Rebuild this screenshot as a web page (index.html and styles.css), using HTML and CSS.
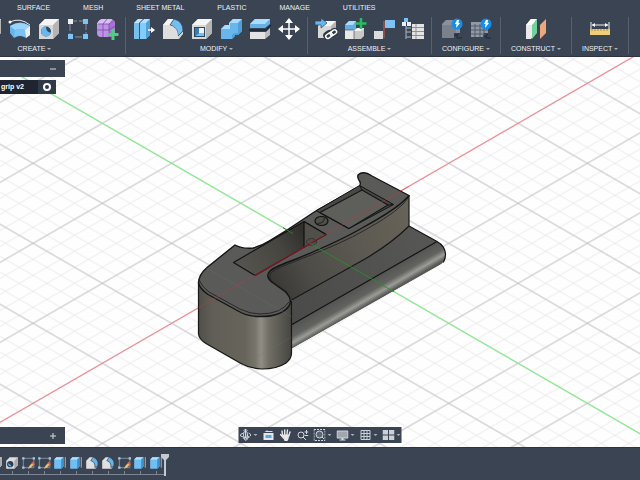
FILE: index.html
```
<!DOCTYPE html>
<html lang="en">
<head>
<meta charset="utf-8">
<meta name="viewport" content="width=device-width, initial-scale=1">
<title>grip v2</title>
<link rel="stylesheet" href="styles.css">
</head>
<body>
<svg class="sprites" aria-hidden="true">
  <symbol id="cube" viewBox="0 0 24 24"><path d="M2 8 8 2h14v14l-6 6H2z" fill="#d7d7d7"/><path d="M2 8 8 2h14l-6 6z" fill="#f4f4f4"/><path d="M16 8l6-6v14l-6 6z" fill="#b5b5b5"/></symbol>
  <symbol id="revolve" viewBox="0 0 24 24"><path d="M2 9Q12 2 22 9v9l-4 3q-6-4-12 0l-4-5z" fill="#65b3ea"/><path d="M2 9Q12 3 22 9l-5 4q-5-2-10 0z" fill="#9bd4fa"/><path d="M17 13l5-4v9l-4 3z" fill="#eee"/><path d="M7 13q5-2 10 0v7q-5-3-11 0z" fill="#7ac3f5"/><path d="M2 5Q12 0 22 8" fill="none" stroke="#e8ebef" stroke-width="1"/><circle cx="2" cy="5" r="1.500" fill="#fff"/></symbol>
  <symbol id="hole" viewBox="0 0 24 24"><use href="#cube"/><circle cx="9" cy="14.500" r="5" fill="#2a4764"/><path d="M9 9.500a5 5 0 1 0 5 6q-5 0-5-6z" fill="#6bb6eb"/></symbol>
  <symbol id="sketchpattern" viewBox="0 0 24 24"><path d="M4 4h16v16H4z" fill="none" stroke="#8792a3" stroke-dasharray="7 2"/><path d="M2 2h5v5H2z" fill="#eee"/><path d="M17 2h5v5h-5zM2 17h5v5H2zM17 17h5v5h-5z" fill="#7cc4f4"/></symbol>
  <symbol id="form" viewBox="0 0 24 24"><path d="M2 7q2-5 6-5h8q4 1 4 5v8q0 4-5 5H6q-4 0-4-4z" fill="#bf91e8"/><path d="M2 7q2-5 6-5h9l-3 5z" fill="#dcbcf6"/><path d="M14 7l5-4q2 8 0 13l-5 4z" fill="#a474d0"/><path d="M2 13h12l6-4M8 7v13M3 7h11l5-4M14 7v13M12 2 8 7" fill="none" stroke="#76509e" stroke-width=".8"/><path d="M18 12v11M12.500 17.500h11" stroke="#4bd07d" stroke-width="3"/></symbol>
  <symbol id="presspull" viewBox="0 0 24 24"><path d="M2 6l4-4h5v16l-4 4H2z" fill="#78bfee"/><path d="M2 6l4-4h5L7 6z" fill="#bfe4fc"/><path d="M8 6l4-4h6v16l-4 4H8z" fill="#83ccff"/><path d="M8 6l4-4h6l-4 4z" fill="#b5e1ff"/><path d="M14 6l4-4v16l-4 4z" fill="#519fd8"/><path d="M7.500 6v16M7.500 6l4-4" stroke="#29394d" stroke-width=".8"/><path d="M16 13h4" stroke="#fff" stroke-width="1.500"/><path d="M19 10l4 3-4 3z" fill="#fff"/></symbol>
  <symbol id="fillet" viewBox="0 0 24 24"><path d="M2 8 7 2h6q9 3 9 12v3l-4 5H2z" fill="#d3d3d3"/><path d="M2 8 7 2h6L9 8z" fill="#f4f4f4"/><path d="M9 8l4-6q9 2 9 12l-5 5Q17 10 9 8z" fill="#74bff1" stroke="#2c4057" stroke-width=".8"/><path d="M2 8h6q9 2 9 11v3H2z" fill="#dedede"/></symbol>
  <symbol id="shell" viewBox="0 0 24 24"><use href="#cube"/><path d="M4 10h11v10H4z" fill="#294866"/><path d="M9 11h5v5H9z" fill="#f2f2f2"/><path d="M5 19l4-3h5v3z" fill="#72c1f4"/><path d="M5 11h4v5l-4 3z" fill="#387cae"/></symbol>
  <symbol id="combine" viewBox="0 0 24 24"><path d="M2 12l4-4h4V6l4-4h9v12l-4 4h-3v1l-3 3H2z" fill="#69b6ec"/><path d="M2 12l4-4h4V6l4-4h9l-4 4h-8v6z" fill="#a7dbff"/><path d="M19 6l4-4v12l-4 4h-3v1l-3 3v-4l3-2h3z" fill="#4f9fd8"/></symbol>
  <symbol id="split" viewBox="0 0 24 24"><path d="M2 7 7 2h15v5l-5 4H2z" fill="#65b1e7"/><path d="M2 7 7 2h15l-5 5z" fill="#a9dcff"/><path d="M1 13h17l5-5" fill="none" stroke="#17283a" stroke-width="1.500"/><path d="M2 15h16l4-4v7l-5 4H2z" fill="#bcbcbc"/><path d="M2 15h15v7H2z" fill="#e3e3e3"/></symbol>
  <symbol id="move" viewBox="0 0 24 24"><path d="M12 3v18M3 12h18" stroke="#fff" stroke-width="1.500"/><path d="M8 6l4-5 4 5zM8 18l4 5 4-5zM6 8l-5 4 5 4zM18 8l5 4-5 4z" fill="#fff"/></symbol>
  <symbol id="insert" viewBox="0 0 24 24"><path d="M4 9l5-5h13v11l-5 6H4z" fill="#d8d8d8"/><path d="M4 9l5-5h13l-5 5z" fill="#f4f4f4"/><path d="M17 9l5-5v11l-5 6z" fill="#b6b6b6"/><path d="M1 4h6V1l6 5-6 5V8H1z" fill="#63b6ef" stroke="#334257" stroke-width=".7"/><g fill="none" stroke="#2e3948" stroke-width="4"><rect x="11" y="16" width="7" height="4" rx="2" transform="rotate(-35 14 18)"/><rect x="16" y="14" width="7" height="4" rx="2" transform="rotate(-35 19 16)"/></g><g fill="none" stroke="#fff" stroke-width="1.500"><rect x="11" y="17" width="7" height="4" rx="2" transform="rotate(-35 14 18)"/><rect x="16" y="14" width="7" height="4" rx="2" transform="rotate(-35 19 16)"/></g></symbol>
  <symbol id="component" viewBox="0 0 24 24"><path d="M2 8l4-4h7v9H2z" fill="#62afe5"/><path d="M2 8l4-4h7l-3 4z" fill="#a7dbff"/><path d="M2 13h9v9H2z" fill="#e8e8e8"/><path d="M11 14l3-3h7v8l-3 3h-7z" fill="#c8c8c8"/><path d="M11 14l3-3h7l-3 3z" fill="#f5f5f5"/><path d="M11 14v8M2 13h9" stroke="#495363" stroke-width=".7"/><path d="M18 1v11M12.500 6.500h11" stroke="#29bc62" stroke-width="2.500"/></symbol>
  <symbol id="joint" viewBox="0 0 24 24"><path d="M2 14h9v8H2z" fill="#dcdcdc"/><path d="M13 3h10v8H13z" fill="#7dc4f5"/><path d="M12 21V4" stroke="#a95247" stroke-width="1.500"/></symbol>
  <symbol id="bom" viewBox="0 0 24 24"><path d="M5 9v13M5 11h5M5 15h5M5 20h5" stroke="#aeb6c2" fill="none"/><path d="M3 1h4v4H3z" fill="#78c4f5"/><path d="M1 5h4v4H1zM6 5h4v4H6z" fill="#e5f2fc"/><path d="M11 7h12v15H11z" fill="#e4e4e4"/><path d="M11 10.500h12M11 14.500h12M11 18.500h12M15 7v15" stroke="#8b929c"/></symbol>
  <symbol id="bolt" viewBox="0 0 12 12"><circle cx="6" cy="6" r="5.500" fill="#148ee8"/><path d="M6 2h2L7.500 5H9l-4 5 .5-4H4z" fill="#fff"/></symbol>
  <symbol id="configure" viewBox="0 0 24 24"><path d="M2 7l4-4h14v13l-4 5H2z" fill="#8a919b"/><path d="M2 8h14v13H2z" fill="#7a818c"/><path d="M14 16h8v7h-8z" fill="#3b4453"/><path d="M14 18h3l2-2M17 18v3h5" stroke="#162a3d" fill="none"/><use href="#bolt" x="11" y="1" width="12" height="12"/></symbol>
  <symbol id="configtable" viewBox="0 0 24 24"><path d="M2 5h17v15H2z" fill="#929aa5"/><path d="M2 9h17M2 13h17M2 17h17M6 7v13M11 7v13M15 7v13" stroke="#515b69"/><path d="M15 16h8v7h-8z" fill="#3b4453"/><path d="M14 19h3l2-2M17 19v2h5" stroke="#162a3d" fill="none"/><use href="#bolt" x="11" y="1" width="12" height="12"/></symbol>
  <symbol id="plane" viewBox="0 0 24 24"><path d="M2 8l5-6h4v15l-4 5H2z" fill="#e9e9e9"/><path d="M8 8l5-6v14l-5 6z" fill="#6fd39b"/><path d="M2 8l5-6h6L8 8z" fill="#fff"/><path d="M16 8l6-6v14l-6 6z" fill="#eea67b"/></symbol>
  <symbol id="measure" viewBox="0 0 24 24"><path d="M3 5v8M21 5v8M4 8h16" stroke="#f0f2f5" fill="none"/><path d="M4 8l3-2v4zM20 8l-3-2v4z" fill="#fff"/><path d="M2 12h20v6H2z" fill="#f0cd78"/><path d="M4 12v2M7 12v2M10 12v2M13 12v2M16 12v2M19 12v2" stroke="#a88a48"/></symbol>
  <symbol id="select" viewBox="0 0 24 24"><path d="M7 3h14v5H7z" fill="#8ed0f8"/></symbol>
  <symbol id="t-hole" viewBox="0 0 12 12"><path d="M1 4l3-3h7v7l-3 3H1z" fill="#ddd"/><path d="M8 4l3-3v7l-3 3z" fill="#aaa"/><circle cx="4.500" cy="7" r="2.700" fill="#273f56"/><path d="M3 6l3 3q-4 0-3-3z" fill="#68b7ee"/></symbol>
  <symbol id="t-sketch" viewBox="0 0 12 12"><path d="M2 2h9v8H2z" fill="none" stroke="#8391a3" stroke-width=".8"/><path d="M1 1h2v2H1zM10 1h2v2h-2zM1 9h2v2H1z" fill="#adc9df"/><path d="M6 11l1-2.500 2.500-2.500L11 7.500 8.500 10z" fill="#eabf68"/><path d="M9 6l1-1 2 2-1 1z" fill="#e26a5a"/></symbol>
  <symbol id="t-extrude" viewBox="0 0 12 12"><path d="M1 3l2-2h6v8l-2 2H1z" fill="#72bff4"/><path d="M1 3l2-2h6L7 3z" fill="#b6e2ff"/><path d="M7 3l2-2v8l-2 2z" fill="#3c91cf"/><path d="M10.500 1v9" stroke="#aebccb" stroke-width=".8"/></symbol>
  <symbol id="t-fillet" viewBox="0 0 12 12"><path d="M1 4l3-3h3q4 2 4 7l-2 3H1z" fill="#e0e0e0"/><path d="M5 4l2-3q5 2 4 7L8.500 10Q9 5 5 4z" fill="#66b4e8" stroke="#2e4259" stroke-width=".6"/></symbol>
</svg>

<header class="ribbon">
  <nav class="tabs" aria-label="Workspace tabs">
    <button type="button">SURFACE</button>
    <button type="button">MESH</button>
    <button type="button">SHEET METAL</button>
    <button type="button">PLASTIC</button>
    <button type="button">MANAGE</button>
    <button type="button">UTILITIES</button>
  </nav>
  <div class="groups">
    <section class="group">
      <div class="tools">
        <button type="button" aria-label="New sketch"><svg><use href="#sketchpattern"/></svg></button>
        <button type="button" aria-label="Box"><svg><use href="#cube"/></svg></button>
        <button type="button" aria-label="Revolve"><svg><use href="#revolve"/></svg></button>
        <button type="button" aria-label="Hole"><svg><use href="#hole"/></svg></button>
        <button type="button" aria-label="Pattern"><svg><use href="#sketchpattern"/></svg></button>
        <button type="button" aria-label="Create form"><svg><use href="#form"/></svg></button>
      </div>
      <button type="button" class="menu">CREATE</button>
    </section>
    <section class="group">
      <div class="tools">
        <button type="button" aria-label="Press pull"><svg><use href="#presspull"/></svg></button>
        <button type="button" aria-label="Fillet"><svg><use href="#fillet"/></svg></button>
        <button type="button" aria-label="Shell"><svg><use href="#shell"/></svg></button>
        <button type="button" aria-label="Combine"><svg><use href="#combine"/></svg></button>
        <button type="button" aria-label="Split body"><svg><use href="#split"/></svg></button>
        <button type="button" aria-label="Move"><svg><use href="#move"/></svg></button>
      </div>
      <button type="button" class="menu">MODIFY</button>
    </section>
    <section class="group">
      <div class="tools">
        <button type="button" aria-label="Insert component"><svg><use href="#insert"/></svg></button>
        <button type="button" aria-label="New component"><svg><use href="#component"/></svg></button>
        <button type="button" aria-label="Joint"><svg><use href="#joint"/></svg></button>
        <button type="button" aria-label="Bill of materials"><svg><use href="#bom"/></svg></button>
      </div>
      <button type="button" class="menu">ASSEMBLE</button>
    </section>
    <section class="group">
      <div class="tools">
        <button type="button" aria-label="Configure design"><svg><use href="#configure"/></svg></button>
        <button type="button" aria-label="Configuration table"><svg><use href="#configtable"/></svg></button>
      </div>
      <button type="button" class="menu">CONFIGURE</button>
    </section>
    <section class="group">
      <div class="tools"><button type="button" aria-label="Offset plane"><svg><use href="#plane"/></svg></button></div>
      <button type="button" class="menu">CONSTRUCT</button>
    </section>
    <section class="group">
      <div class="tools"><button type="button" aria-label="Measure"><svg><use href="#measure"/></svg></button></div>
      <button type="button" class="menu">INSPECT</button>
    </section>
    <section class="group">
      <div class="tools"><button type="button" aria-label="Select"><svg><use href="#select"/></svg></button></div>
    </section>
  </div>
</header>

<main class="viewport">
  <svg class="scene" viewBox="0 57 640 390" preserveAspectRatio="xMidYMid slice" role="img" aria-label="Isometric view of the grip body">
    <defs>
      <pattern id="minorA" width="400" height="16" patternUnits="userSpaceOnUse" patternTransform="translate(310.2 235.3) skewY(30)"><path d="M0 8h400" stroke="#e6e6ea" stroke-width=".8"/></pattern>
      <pattern id="minorB" width="400" height="16" patternUnits="userSpaceOnUse" patternTransform="translate(310.2 235.3) skewY(-30)"><path d="M0 8h400" stroke="#e6e6ea" stroke-width=".8"/></pattern>
      <pattern id="majorA" width="400" height="80" patternUnits="userSpaceOnUse" patternTransform="translate(310.2 203.3) skewY(30)"><path d="M0 40h400" stroke="#bcbcc1" stroke-width=".8"/></pattern>
      <pattern id="majorB" width="400" height="80" patternUnits="userSpaceOnUse" patternTransform="translate(310.2 203.3) skewY(-30)"><path d="M0 40h400" stroke="#bcbcc1" stroke-width=".8"/></pattern>
      <linearGradient id="front" gradientUnits="userSpaceOnUse" x1="198" y1="0" x2="292" y2="0"><stop offset="0" stop-color="#504e49"/><stop offset=".15" stop-color="#605e57"/><stop offset=".5" stop-color="#67645b"/><stop offset=".61" stop-color="#77746b"/><stop offset=".67" stop-color="#918e85"/><stop offset=".75" stop-color="#716f66"/><stop offset="1" stop-color="#45443f"/></linearGradient>
      <linearGradient id="side" gradientUnits="userSpaceOnUse" x1="270" y1="280" x2="410" y2="210"><stop offset="0" stop-color="#383835"/><stop offset=".25" stop-color="#4e4c47"/><stop offset=".6" stop-color="#5c5952"/><stop offset="1" stop-color="#676359"/></linearGradient>
      <linearGradient id="ledge" gradientUnits="userSpaceOnUse" x1="300" y1="310" x2="420" y2="235"><stop offset="0" stop-color="#4b4b4a"/><stop offset="1" stop-color="#565655"/></linearGradient>
      <linearGradient id="tube" gradientUnits="userSpaceOnUse" x1="360" y1="283" x2="374" y2="307"><stop offset="0" stop-color="#515150"/><stop offset=".45" stop-color="#62625f"/><stop offset=".64" stop-color="#9b9b98"/><stop offset=".8" stop-color="#5c5c59"/><stop offset="1" stop-color="#3e3e3b"/></linearGradient>
      <linearGradient id="pocket" gradientUnits="userSpaceOnUse" x1="242" y1="266" x2="304" y2="232"><stop offset="0" stop-color="#55534d"/><stop offset=".6" stop-color="#464540"/><stop offset="1" stop-color="#302f2c"/></linearGradient>
    </defs>
    <rect x="-1000" y="-1000" width="2640" height="2640" fill="#fefefe"/>
    <rect x="-1000" y="-1000" width="2640" height="2640" fill="url(#minorA)"/>
    <rect x="-1000" y="-1000" width="2640" height="2640" fill="url(#minorB)"/>
    <rect x="-1000" y="-1000" width="2640" height="2640" fill="url(#majorA)"/>
    <rect x="-1000" y="-1000" width="2640" height="2640" fill="url(#majorB)"/>
    <path d="M-382.800 643.300 1003.200-156.700" stroke="#ff7f88"/>
    <path d="M-382.800-156.700 1003.200 643.300" stroke="#74f874"/>

    <g stroke-linejoin="round" stroke-linecap="round">
      <path d="M409 226 437 241.500Q445 246 445.500 254 446 261 440 264.500L291.500 348.500V300Z" fill="url(#ledge)"/>
      <path d="M437 241.500Q445 246 445.500 254 446 261 440 264.500L291.500 348.500V324.500Z" fill="url(#tube)"/>
      <path d="M409 226 437 241.500Q445 246 445.500 254 445.500 259 443.500 262M437 241.500 292 324.500" fill="none" stroke="#141414" stroke-width="1.200"/>
      <path d="M409 195.500V226Q392 243 365 259 338 274 291.500 300L262 278 275 264 310 247Z" fill="url(#side)"/>
      <path d="M409 195.500V226Q392 243 365 259 338 274 291.500 300" fill="none" stroke="#171717" stroke-width="1.200"/>
      <path d="M198.500 282V334Q199 339 206 343.500L241 363.500Q250 368.500 262 369 277 369 286 363 292 358 291.500 352V301Z" fill="url(#front)"/>
      <path d="M198.500 282V334Q199 339 206 343.500L241 363.500Q250 368.500 262 369 277 369 286 363 292 358 291.500 352V301" fill="none" stroke="#181817" stroke-width="1.200"/>
      <path d="M235 245 207 267.500Q198.500 275 198.500 283 200 289 208 294.500L239 311.500Q248 316.500 259 316.500 281 317 289 306 293 299 285 291.500L271 281.500Q265 276 270 271 274 267 296 259 340 241 362 228 399 208 409 195.500L372 176Q363 170 358 175 357 178 360 182 361 184 359 187L316.500 210.500 287 230 269 241Q261 246 253 248 242 249 235 245Z" fill="#5a5a58" stroke="#151515" stroke-width="1.400"/>
      <path d="M199 280Q202 287 209 292L240 309Q250 314 260 314 281 314 289 302M287 292 273 282Q267 277 272 272 277 268 297 260.500 343 243 365 230 400 211 409 197" fill="none" stroke="#222" stroke-width=".9"/>
      <path d="M233.500 262.500 304 221.500 326 234.500 255 275.500Z" fill="url(#pocket)" stroke="#111" stroke-width="1.100"/>
      <path d="M304 221.500 326 234.500 304 247Z" fill="#504f4a"/>
      <path d="M304 247V221.500L326 234.500" fill="none" stroke="#111" stroke-width="1.200"/>
      <ellipse cx="311.500" cy="242" rx="5" ry="3.500" fill="#4b4a46" fill-opacity=".5" stroke="#2c2c2a" stroke-width=".7"/>
      <path d="M316.500 210.500 359.500 185.500 393.500 204.500 349 228.500Z" fill="#484845" stroke="#111"/>
      <path d="M320 212.500 362 190 388 205 349 228.500Z" fill="#5e5e5b" stroke="#151515" stroke-width="1.100"/>
      <path d="M359.500 185.500 362 190M388 205 393.500 204.500" stroke="#151515"/>
      <ellipse cx="321.500" cy="221" rx="6.500" ry="4.500" fill="#504f48" stroke="#111" stroke-width="1.200"/>
      <path d="M318 223.500Q324 223 324.500 218" fill="none" stroke="#302f2b" stroke-width="1.500"/>
    </g>
    <path d="M198.500 307.800 409 186.300" stroke="#c83a45" stroke-opacity=".45"/>
    <path d="M255 275.500 326 234.500" stroke="#7b1520" stroke-width="1.200"/>
    <path d="M310 243.300 394 291.800" stroke="#1f9428" stroke-opacity=".85"/>
    <path d="M283 227.700 293 233.500" stroke="#2c7b31"/>
    <path d="M206 268 292 317M241 366 292 337" stroke="#777" stroke-opacity=".25"/>
  </svg>

  <aside class="browser">
    <div class="panel"><button type="button" aria-label="Collapse browser"><svg viewBox="0 0 8 8"><path d="M1 4h6" stroke="#d6dbe2"/></svg></button></div>
    <div class="document">
      <span class="name">grip v2</span>
      <label class="activate"><input type="radio" name="active" checked aria-label="Activate grip v2"></label>
    </div>
  </aside>

  <div class="panel comments"><button type="button" aria-label="Expand comments"><svg viewBox="0 0 8 8"><path d="M1 4h6M4 1v6" stroke="#d6dbe2"/></svg></button></div>

  <div class="navbar" role="toolbar" aria-label="Navigation">
    <button type="button" class="drop" aria-label="Orbit"><svg viewBox="0 0 12 12" fill="none" stroke="#dfe3e8" stroke-width=".9"><path d="M6 0v9M4 2l2-2 2 2M4 4Q0 5 1 7q3 2 7 1M9 4q3 1 2 3M4 9q2 4 4 1M7 6l3 2-3 2"/><ellipse cx="6" cy="6" rx="2" ry="4"/></svg></button>
    <button type="button" aria-label="Look at"><svg viewBox="0 0 12 12"><path d="M1 4h10v7H1z" fill="#e5e7ea"/><path d="M3 6h6v3H3z" fill="#55a9df"/><path d="M2 3l3-2v1h5v1z" fill="#d5dbe2"/></svg></button>
    <button type="button" aria-label="Pan"><svg viewBox="0 0 12 12"><path d="M3 6 2.500 2M5.200 6V1M7.400 6 8 1M9.300 7 10.500 3M4 9 1 5.500" stroke="#e7e7e7" stroke-width="1.400" stroke-linecap="round"/><path d="M2.500 5.500h7.300L9 10l-1 2H5z" fill="#e7e7e7"/></svg></button>
    <button type="button" aria-label="Zoom"><svg viewBox="0 0 12 12" fill="none" stroke="#d2d7dd"><circle cx="4.500" cy="6" r="3"/><path d="M6.500 8l3 3M8 3h4M10 1v4M8 6.500h4"/></svg></button>
    <button type="button" class="drop" aria-label="Fit"><svg viewBox="0 0 12 12" fill="none" stroke="#d2d7dd"><path d="M.5.500h11v11H.5z" stroke-dasharray="2 1"/><circle cx="6" cy="5.500" r="3.500" fill="#5c6674"/><path d="M8.500 8l2 2"/></svg></button>
    <button type="button" class="drop" aria-label="Display settings"><svg viewBox="0 0 12 12"><path d="M.5 2h11v7H.5z" fill="#a0a7af" stroke="#d0d5da"/><path d="M5 9h2v2H5zM3 10.500h6v1H3z" fill="#d9dde2"/></svg></button>
    <button type="button" class="drop" aria-label="Grid"><svg viewBox="0 0 12 12"><path d="M1.500 1.500h9v9h-9zM1.500 4.500h9M1.500 7.500h9M4.500 1.500v9M7.500 1.500v9" fill="none" stroke="#c9d0d8"/></svg></button>
    <button type="button" class="drop" aria-label="Viewports"><svg viewBox="0 0 12 12"><path d="M0 1h5.500v4.500H0zM6.500 1H12v4.500H6.500zM0 6.500h5.500V11H0zM6.500 6.500H12V11H6.500z" fill="#cbd0d6"/></svg></button>
  </div>
</main>

<footer class="timeline" aria-label="Timeline">
  <ol>
    <li><button type="button" aria-label="Hole"><svg><use href="#t-hole"/></svg></button></li>
    <li><button type="button" aria-label="Hole"><svg><use href="#t-hole"/></svg></button></li>
    <li><button type="button" aria-label="Sketch"><svg><use href="#t-sketch"/></svg></button></li>
    <li><button type="button" aria-label="Sketch"><svg><use href="#t-sketch"/></svg></button></li>
    <li><button type="button" aria-label="Extrude"><svg><use href="#t-extrude"/></svg></button></li>
    <li><button type="button" aria-label="Extrude"><svg><use href="#t-extrude"/></svg></button></li>
    <li><button type="button" aria-label="Fillet"><svg><use href="#t-fillet"/></svg></button></li>
    <li><button type="button" aria-label="Fillet"><svg><use href="#t-fillet"/></svg></button></li>
    <li><button type="button" aria-label="Sketch"><svg><use href="#t-sketch"/></svg></button></li>
    <li><button type="button" aria-label="Extrude"><svg><use href="#t-extrude"/></svg></button></li>
    <li><button type="button" aria-label="Extrude"><svg><use href="#t-extrude"/></svg></button></li>
  </ol>
  <svg class="marker" viewBox="0 0 8 22" aria-hidden="true"><path d="M0 0h8v3L5 6v16H3V6L0 3z" fill="#c5cad2"/></svg>
</footer>
</body>
</html>
```
FILE: styles.css
```
:root {
  --bar: #3b4453;
  --rule: #566071;
  --text: #eef0f3;
}

* {
  box-sizing: border-box;
}

body {
  display: flex;
  flex-direction: column;
  min-height: 100vh;
  margin: 0;
  overflow: hidden;
  background: var(--bar);
  color: var(--text);
  font: 7px/10px "Liberation Sans", Arial, sans-serif;
}

button {
  display: block;
  padding: 0;
  border: 0;
  background: none;
  color: inherit;
  font: inherit;
  white-space: nowrap;
}

svg {
  display: block;
}

.sprites {
  position: absolute;
  width: 0;
  height: 0;
}

.ribbon {
  flex: none;
  overflow: hidden;
  padding-bottom: 2px;
  border-bottom: 1px solid #2c3442;
}

.tabs {
  display: flex;
  gap: 33px;
  padding: 3px 17px 4px;
}

/* The ribbon is scrolled, so its first group starts left of the window. */
.groups {
  display: flex;
  margin-left: -56px;
}

.group {
  display: flex;
  flex: none;
  flex-direction: column;
  align-items: center;
  gap: 3px;
  padding: 0 6px;
}

.group + .group {
  border-left: 1px solid var(--rule);
}

.tools {
  display: flex;
  gap: 5px;
}

.tools svg {
  width: 24px;
  height: 24px;
}

.menu {
  display: flex;
  align-items: center;
  gap: 2px;
  padding: 0 4px;
}

.menu::after,
.drop::after {
  content: "";
  border: 2px solid transparent;
  border-top-color: #a9b1bd;
  border-bottom: 0;
}

.viewport {
  position: relative;
  flex: 1;
  min-height: 200px;
  background: #fefefe;
}

.scene {
  position: absolute;
  inset: 0;
  width: 100%;
  height: 100%;
}

.browser {
  position: absolute;
  top: 3px;
  left: 0;
  display: flex;
  flex-direction: column;
  align-items: flex-start;
  gap: 3px;
}

.panel {
  display: flex;
  align-items: center;
  justify-content: flex-end;
  width: 65px;
  height: 17px;
  padding-right: 8px;
  background: var(--bar);
}

.panel svg {
  width: 8px;
  height: 8px;
}

.document {
  display: flex;
  height: 14px;
  background: #1e2530;
  color: #fff;
  font-weight: bold;
  line-height: 14px;
}

.name {
  padding: 0 14px 0 1px;
}

.activate {
  display: flex;
  align-items: center;
  padding: 0 5px;
  background: #303948;
}

.activate input {
  appearance: none;
  width: 8px;
  height: 8px;
  margin: 0;
  border: 2px solid #fff;
  border-radius: 50%;
}

.comments {
  position: absolute;
  bottom: 3px;
  left: 0;
}

.navbar {
  position: absolute;
  bottom: 4px;
  left: 50%;
  display: flex;
  align-items: center;
  gap: 5px;
  height: 16px;
  padding: 0 1px;
  background: var(--bar);
  transform: translateX(-50%);
}

.navbar svg {
  width: 12px;
  height: 12px;
}

.drop {
  display: flex;
  align-items: center;
  gap: 2px;
}

.timeline {
  display: flex;
  flex: none;
  align-items: flex-start;
  height: 33px;
  padding-top: 6px;
  border-top: 1px solid #2c3442;
}

.timeline ol {
  display: flex;
  margin: 0 0 0 -12px;
  padding: 0;
  list-style: none;
}

.timeline li {
  padding: 2px 1px 0;
  border-bottom: 1px solid #7b8493;
}

.timeline li::after {
  content: "";
  display: block;
  width: 1px;
  height: 3px;
  margin: 1px auto 0;
  background: #7b8493;
}

.timeline li svg {
  width: 14px;
  height: 14px;
}

.marker {
  width: 8px;
  height: 22px;
  margin-left: -3px;
}
```
